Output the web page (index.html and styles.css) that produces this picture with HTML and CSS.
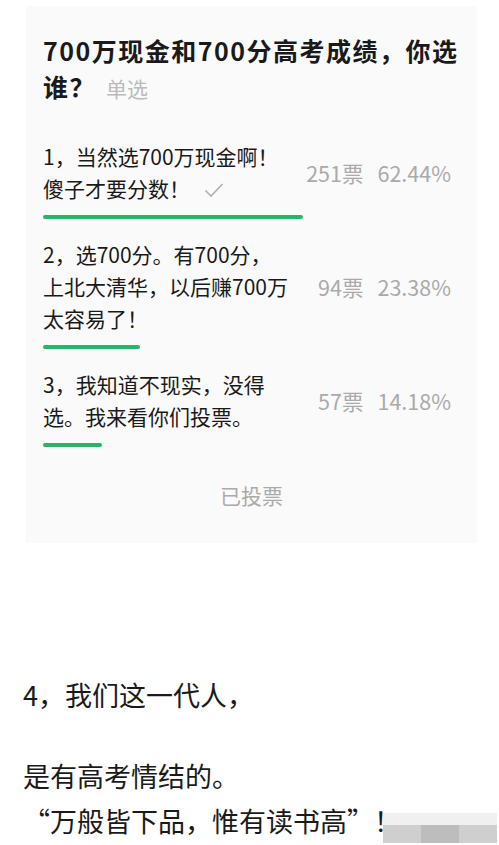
FILE: index.html
```html
<!DOCTYPE html>
<html lang="zh-CN">
<head>
  <meta charset="UTF-8">
  <meta name="viewport" content="width=device-width, initial-scale=1.0">
  <title>700万现金和700分高考成绩</title>
  <link rel="stylesheet" href="styles.css">
</head>
<body>

  <div class="vote-card">
    <h2 class="vote-title">700万现金和700分高考成绩，你选<br><span class="title-end">谁？</span><span class="vote-type">单选</span></h2>

    <ul class="options">
      <li class="option">
        <div class="option-row">
          <p class="option-text">1，当然选700万现金啊！<br>傻子才要分数！<svg class="check" width="20" height="16" viewBox="0 0 20 16"><polyline points="1.5,8.5 7,14 18.5,2" fill="none" stroke="#b0b0b0" stroke-width="1.6"/></svg></p>
          <div class="option-stats"><span>251票</span><span>62.44%</span></div>
        </div>
        <div class="bar" style="width: 62.44%;"></div>
      </li>
      <li class="option">
        <div class="option-row">
          <p class="option-text">2，选700分。有700分，<br>上北大清华，以后赚700万<br>太容易了！</p>
          <div class="option-stats"><span>94票</span><span>23.38%</span></div>
        </div>
        <div class="bar" style="width: 23.38%;"></div>
      </li>
      <li class="option">
        <div class="option-row">
          <p class="option-text">3，我知道不现实，没得<br>选。我来看你们投票。</p>
          <div class="option-stats"><span>57票</span><span>14.18%</span></div>
        </div>
        <div class="bar" style="width: 14.18%;"></div>
      </li>
    </ul>

    <div class="voted">已投票</div>
  </div>

  <div class="post-text">
    <p>4，我们这一代人，</p>
    <p class="gap">是有高考情结的。</p>
    <p class="last-line">“万般皆下品，惟有读书高”！
      <span class="watermark">
        <i></i><i></i><i></i><i></i><i></i><i></i>
        <i></i><i></i><i></i><i></i><i></i><i></i>
      </span>
    </p>
  </div>

</body>
</html>
```

FILE: styles.css
```css
body {
  font-family: "Noto Sans CJK SC", "Noto Sans", sans-serif;
  margin: 0;
  padding: 6px 0 0 0;
  background-color: #fff;
  color: #1a1a1a;
  overflow: hidden;
}

.vote-card {
  width: 451px;
  margin-left: 26px;
  padding: 26px 17px 34px 17px;
  box-sizing: border-box;
  background-color: #fafafa;
}

.vote-title {
  margin: 0 0 36px 0;
  font-size: 25px;
  line-height: 36px;
  font-weight: 700;
  letter-spacing: 1.5px;
}

.title-end {
  margin-right: 10px;
}

.vote-type {
  font-size: 21px;
  line-height: 1;
  font-weight: 400;
  letter-spacing: 0;
  color: #bbb;
}

.options {
  list-style: none;
  margin: 0;
  padding: 0;
}

.option {
  margin-bottom: 19px;
}

.option-row {
  display: flex;
  align-items: center;
  justify-content: space-between;
}

.option-text {
  margin: 0;
  font-size: 21px;
  line-height: 32px;
  color: #1a1a1a;
}

.check {
  margin-left: 14px;
  vertical-align: -1px;
}

.option-stats {
  display: flex;
  gap: 14px;
  margin-right: 9px;
  font-size: 21.5px;
  color: #aaa;
}

.bar {
  height: 4px;
  margin-top: 11px;
  border-radius: 2px;
  background-color: #28b46a;
}

.voted {
  margin-top: 34px;
  text-align: center;
  font-size: 21px;
  line-height: 28px;
  color: #aaa;
}

.post-text {
  padding: 129px 0 0 23px;
  font-size: 27px;
  line-height: 45px;
  color: #1a1a1a;
}

.post-text p {
  margin: 0;
}

.post-text .gap {
  margin-top: 36px;
}

.last-line {
  position: relative;
}

.watermark {
  position: absolute;
  left: 360px;
  top: 15px;
  display: grid;
  grid-template-columns: repeat(6, 19px);
  grid-template-rows: 12px 20px;
}

.watermark i:nth-child(-n+6) {
  background-color: #f0f0f0;
}

.watermark i:nth-child(n+7) {
  background-color: #cfcfcf;
}

.watermark i:nth-child(9),
.watermark i:nth-child(10) {
  background-color: #bdbdbd;
}
```
